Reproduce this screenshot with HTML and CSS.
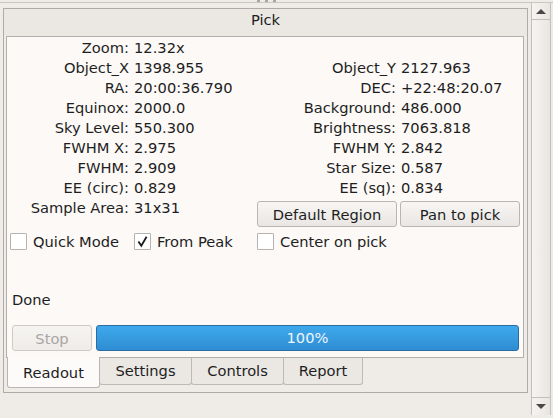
FILE: index.html
```html
<!DOCTYPE html>
<html>
<head>
<meta charset="utf-8">
<link rel="stylesheet" href="styles.css">
</head>
<body>
<div class="window">
  <div class="splitter"><span class="grip"><i></i><i></i><i></i></span></div>
  <div class="body">
    <div class="dock">
      <div class="dock-title">Pick</div>
      <div class="panel">
        <div class="readout">
          <div class="lbl">Zoom:</div><div class="val">12.32x</div><div class="lbl"></div><div class="val"></div>
          <div class="lbl">Object_X</div><div class="val">1398.955</div><div class="lbl">Object_Y</div><div class="val">2127.963</div>
          <div class="lbl">RA:</div><div class="val">20:00:36.790</div><div class="lbl">DEC:</div><div class="val">+22:48:20.07</div>
          <div class="lbl">Equinox:</div><div class="val">2000.0</div><div class="lbl">Background:</div><div class="val">486.000</div>
          <div class="lbl">Sky Level:</div><div class="val">550.300</div><div class="lbl">Brightness:</div><div class="val">7063.818</div>
          <div class="lbl">FWHM X:</div><div class="val">2.975</div><div class="lbl">FWHM Y:</div><div class="val">2.842</div>
          <div class="lbl">FWHM:</div><div class="val">2.909</div><div class="lbl">Star Size:</div><div class="val">0.587</div>
          <div class="lbl">EE (circ):</div><div class="val">0.829</div><div class="lbl">EE (sq):</div><div class="val">0.834</div>
          <div class="lbl last">Sample Area:</div><div class="val last">31x31</div>
          <button class="btn btn-default">Default Region</button>
          <button class="btn btn-pan">Pan to pick</button>
        </div>
        <div class="checks">
          <label class="check first"><span class="box"></span>Quick Mode</label>
          <label class="check"><span class="box"><svg width="15" height="15" viewBox="0 0 15 15"><path d="M3.4 7.4 L6.3 11.8 L11.6 2.8" fill="none" stroke="#1c1c1c" stroke-width="1.8"/></svg></span>From Peak</label>
          <label class="check third"><span class="box"></span>Center on pick</label>
        </div>
        <div class="spacer"></div>
        <div class="status">Done</div>
        <div class="progress-row">
          <button class="btn stop" disabled>Stop</button>
          <div class="progress">100%</div>
        </div>
      </div>
      <div class="tabs">
        <div class="tab active t-readout">Readout</div>
        <div class="tab t-settings">Settings</div>
        <div class="tab t-controls">Controls</div>
        <div class="tab t-report">Report</div>
      </div>
    </div>
    <div class="scrollbar">
      <div class="sb-btn up"><span class="tri-up"></span></div>
      <div class="sb-track"></div>
      <div class="sb-btn down"><span class="tri-down"></span></div>
    </div>
  </div>
</div>
</body>
</html>
```

FILE: styles.css
```css
html, body {
  margin: 0;
  padding: 0;
}
body {
  width: 553px;
  height: 418px;
  overflow: hidden;
  background: #efece8;
  font-family: "DejaVu Sans", sans-serif;
  font-size: 14.67px;
  color: #1e1e1e;
}
.window {
  width: 553px;
  height: 418px;
  display: flex;
  flex-direction: column;
}
.splitter {
  height: 2px;
  border-bottom: 1px solid #c9c5c1;
  display: flex;
  justify-content: center;
}
.grip {
  display: flex;
  gap: 5px;
  margin-left: -20px;
}
.grip i {
  width: 3px;
  height: 2px;
  background: #a9a6a3;
}
.body {
  display: flex;
  flex: 1;
}
.dock {
  margin: 5px 0 0 3px;
  width: 523px;
  height: 383px;
  border: 1px solid #aeaba8;
  display: flex;
  flex-direction: column;
}
.dock-title {
  height: 27px;
  line-height: 22px;
  text-align: center;
  background: #ebe8e4;
}
.panel {
  margin-left: 2px;
  width: 516px;
  height: 320px;
  border: 1px solid #b1aeab;
  background: #fcf9f7;
  display: flex;
  flex-direction: column;
  position: relative;
  z-index: 1;
}
.readout {
  display: grid;
  grid-template-columns: 122px 117px 140px 1fr;
  column-gap: 5px;
  grid-template-rows: repeat(8, 20px) 31px;
  padding-top: 1px;
}
.lbl {
  text-align: right;
  line-height: 20px;
  white-space: nowrap;
}
.val {
  line-height: 20px;
  white-space: nowrap;
}
.last {
  align-self: start;
}
.btn {
  font-family: "DejaVu Sans", sans-serif;
  font-size: 14.67px;
  color: #1e1e1e;
  background: linear-gradient(#f8f6f4, #e9e6e3);
  border: 1px solid #b8b5b2;
  border-radius: 3px;
  padding: 0;
  height: 26px;
}
.btn-default {
  align-self: start;
  margin: 3px 0 0 1px;
  width: 140px;
}
.btn-pan {
  align-self: start;
  margin: 3px 0 0 -1px;
  width: 120px;
}
.checks {
  display: grid;
  grid-template-columns: 122px 117px 140px 1fr;
  column-gap: 5px;
  height: 22px;
  margin-top: 1px;
  align-items: center;
}
.check {
  display: flex;
  align-items: center;
  gap: 6px;
  white-space: nowrap;
}
.check.first {
  margin-left: 3px;
}
.check.third {
  margin-left: 1px;
}
.box {
  width: 15px;
  height: 15px;
  border: 1px solid #b6b3b0;
  border-radius: 1px;
  background: #ffffff;
  display: flex;
  align-items: center;
  justify-content: center;
}
.spacer {
  flex: 1;
}
.status {
  line-height: 20px;
  padding-left: 5px;
}
.progress-row {
  display: flex;
  gap: 4px;
  margin-top: 15px;
  padding: 0 4px 6px 5px;
}
.stop {
  width: 80px;
  color: #a9a6a3;
  background: linear-gradient(#f6f4f2, #eeebe8);
  border-color: #cdcac7;
}
.progress {
  flex: 1;
  height: 24px;
  border: 1px solid #2a6da3;
  border-radius: 3px;
  background: linear-gradient(#3ea9ec, #2f8dd3);
  color: #eef5fb;
  text-align: center;
  line-height: 24px;
}
.tabs {
  display: flex;
  margin: -1px 0 0 3px;
  align-items: flex-start;
}
.tab {
  height: 27px;
  line-height: 26px;
  text-align: center;
  background: #ebe8e4;
  border: 1px solid #bdbab7;
  border-top: none;
  border-radius: 0 0 3px 3px;
  box-sizing: border-box;
  margin-top: 1px;
}
.tab.active {
  background: #fdfbfa;
  height: 31px;
  margin-top: 0;
  line-height: 31px;
  position: relative;
  z-index: 2;
  border-color: #b8b5b2;
}
.t-readout { width: 93px; }
.t-settings { width: 93px; margin-left: -1px; }
.t-controls { width: 93px; margin-left: -1px; }
.t-report { width: 80px; margin-left: -1px; }
.scrollbar {
  margin-left: 3px;
  width: 18px;
  height: 412px;
  border-left: 1px solid #c3bfbb;
  border-right: 1px solid #c3bfbb;
  background: linear-gradient(90deg, #f6f4f2, #e8e5e2);
  display: flex;
  flex-direction: column;
}
.sb-btn {
  height: 16px;
  display: flex;
  align-items: center;
  justify-content: center;
}
.sb-btn.up {
  border-bottom: 1px solid #c3bfbb;
}
.sb-btn.down {
  border-top: 1px solid #c3bfbb;
  height: 17px;
}
.sb-track {
  flex: 1;
}
.tri-up {
  width: 0;
  height: 0;
  border-left: 5px solid transparent;
  border-right: 5px solid transparent;
  border-bottom: 5px solid #4a4846;
}
.tri-down {
  width: 0;
  height: 0;
  border-left: 5px solid transparent;
  border-right: 5px solid transparent;
  border-top: 5px solid #4a4846;
}
```
